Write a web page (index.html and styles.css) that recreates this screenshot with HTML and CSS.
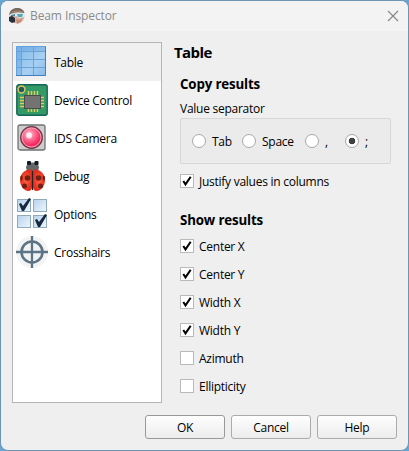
FILE: index.html
```html
<!DOCTYPE html>
<html lang="en">
<head>
<meta charset="utf-8">
<title>Beam Inspector</title>
<link rel="stylesheet" href="styles.css">
</head>
<body>
<div class="window">
  <header class="titlebar">
    <svg class="logo" width="16" height="16" viewBox="0 0 16 16">
      <circle cx="8" cy="8" r="7.500" fill="#d9b3a0"/>
      <path d="M0 7C1 2 4 0 8 0c4 0 7 2 7.500 5L9 4 3 5z" fill="#796860"/>
      <path d="M3 4l5-1 6 1" stroke="#a78c7a" fill="none"/>
      <path d="M1 6l7-1 7.500 0v4l-5 1-3-2-6 1z" fill="#dce9ed"/>
      <path d="M8 6h6l-1 3-4 0z" fill="#56a8b8"/><path d="M2 7l4-1v2l-4 1z" fill="#518795"/>
      <path d="M0 9l3-1 3 2v4l-3 1-3-2z" fill="#292e38"/>
      <path d="M7 11l3 1 3-2-1 4-4 2z" fill="#c48b79"/>
    </svg>
    <span class="caption">Beam Inspector</span>
    <svg class="close" width="12" height="12" viewBox="0 0 12 12"><path d="M1 1l10 10M11 1L1 11" stroke="#858585" stroke-width="1.100"/></svg>
  </header>
  <main class="body">
    <nav class="pages">
      <div class="page selected">
        <svg width="32" height="32" viewBox="0 0 32 32">
          <defs><linearGradient id="tb" x2="1" y2="1"><stop stop-color="#82b8e9"/><stop offset=".6" stop-color="#a7d0f2"/><stop offset="1" stop-color="#86b9e8"/></linearGradient></defs>
          <rect x="1" y="1" width="29" height="29" fill="url(#tb)"/>
          <path d="M1 1h29v4H1zM1 1h4v29H1z" fill="#5b9bdc" opacity=".3"/>
          <path d="M1 5.500h29M1 13.500h29M1 21.500h29M5.500 1v29M17.500 1v29" stroke="#6ba3d8" fill="none"/>
          <path d="M.5 30V.5H30" stroke="#62a1df" fill="none"/><path d="M29.500 1v28.500H0" stroke="#437fc1" fill="none"/>
        </svg><span>Table</span>
      </div>
      <div class="page">
        <svg width="32" height="32" viewBox="0 0 32 32">
          <rect x=".8" y=".8" width="30.400" height="30.400" rx="2" fill="#339966" stroke="#146458" stroke-width="1.400"/>
          <circle cx="5.500" cy="5.500" r="3.400" fill="#155e65" stroke="#e2c15b" stroke-width="1.500"/>
          <path d="M12.500 7v21M15.500 7v21M18.500 7v21M21.500 7v21M4 13.500h24M4 16.500h24M4 19.500h24M4 22.500h24" stroke="#e0cb62" stroke-width="1.500"/>
          <rect x="8.500" y="11.500" width="16" height="13" fill="#737373" stroke="#4b4b4b"/>
        </svg><span>Device Control</span>
      </div>
      <div class="page">
        <svg width="32" height="32" viewBox="0 0 32 32">
          <defs><radialGradient id="cam" cx=".4" cy=".35"><stop stop-color="#ffdbe4"/><stop offset=".35" stop-color="#ff86a6"/><stop offset="1" stop-color="#f52c63"/></radialGradient></defs>
          <rect x="2" y="3" width="27" height="25" rx="2" fill="#cdcdcd" stroke="#727272" stroke-width="1.300"/>
          <circle cx="15.500" cy="15.500" r="10.800" fill="url(#cam)" stroke="#693947" stroke-width="1.300"/>
          <circle cx="15.500" cy="15.500" r="9.500" fill="none" stroke="#f9a4b7" stroke-width="1"/>
          <circle cx="13" cy="13.500" r="3" fill="#fff" opacity=".75"/>
        </svg><span>IDS Camera</span>
      </div>
      <div class="page">
        <svg width="32" height="32" viewBox="0 0 32 32">
          <defs><radialGradient id="bug"><stop stop-color="#ff6042"/><stop offset="1" stop-color="#df2d1e"/></radialGradient></defs>
          <ellipse cx="16.500" cy="7.500" rx="6.500" ry="5" fill="#666"/>
          <rect x="11" y="1" width="4" height="4" rx="1" fill="#111b26"/><rect x="18.500" y="1" width="4" height="4" rx="1" fill="#111b26"/>
          <path d="M16 10C11 8 4 13 4 20c0 7 5 11 8 11 3 0 4-2 4-4z" fill="url(#bug)"/>
          <path d="M17 10c5-2 12 3 12 10 0 7-5 11-8 11-3 0-4-2-4-4z" fill="url(#bug)"/>
          <path d="M16.500 11v19" stroke="#222" stroke-width="1.200"/>
          <g fill="#722014"><circle cx="11.500" cy="18" r="2.800"/><circle cx="22.500" cy="18" r="2.800"/><ellipse cx="5.500" cy="18" rx="1.200" ry="2.500"/><ellipse cx="27.800" cy="18" rx="1.200" ry="2.500"/><circle cx="8.500" cy="26" r="2.500"/><circle cx="24.500" cy="26" r="2.500"/></g>
        </svg><span>Debug</span>
      </div>
      <div class="page">
        <svg width="32" height="32" viewBox="0 0 32 32">
          <defs><linearGradient id="op" x2="1" y2="1"><stop stop-color="#b7d2ed"/><stop offset="1" stop-color="#edf7ff"/></linearGradient></defs>
          <g fill="url(#op)" stroke="#91aaba"><rect x="1.500" y="1.500" width="13" height="12"/><rect x="17.500" y="1.500" width="13" height="12"/><rect x="1.500" y="17.500" width="13" height="12"/><rect x="17.500" y="17.500" width="13" height="12"/></g>
          <path id="tick" d="M3 6l2-1 2 3 6-8 2 1-7 12H6z" fill="#17273e"/>
          <use href="#tick" x="16" y="16"/>
        </svg><span>Options</span>
      </div>
      <div class="page">
        <svg width="32" height="32" viewBox="0 0 32 32">
          <circle cx="16" cy="16" r="16" fill="#f3f3f3"/>
          <circle cx="16" cy="16" r="10.500" fill="none" stroke="#5d7386" stroke-width="2.600"/>
          <path d="M16 0v32M0 16h32" stroke="#5d7386" stroke-width="2.300"/>
        </svg><span>Crosshairs</span>
      </div>
    </nav>
    <section class="content">
      <h1>Table</h1>
      <h2 class="copy">Copy results</h2>
      <p class="label">Value separator</p>
      <div class="group">
        <label class="radio tab"><i></i><span>Tab</span></label>
        <label class="radio space"><i></i><span>Space</span></label>
        <label class="radio comma"><i></i><span>,</span></label>
        <label class="radio on"><i></i><span>;</span></label>
      </div>
      <label class="check justify"><i><svg width="12" height="12" viewBox="0 0 12 12"><path id="mark" d="M2.300 6l2.200 3.400L9.700 1.800" fill="none" stroke="#000" stroke-width="2"/></svg></i><span>Justify values in columns</span></label>
      <h2 class="show">Show results</h2>
      <div class="checks">
        <label class="check"><i><svg width="12" height="12" viewBox="0 0 12 12"><use href="#mark"/></svg></i><span>Center X</span></label>
        <label class="check"><i><svg width="12" height="12" viewBox="0 0 12 12"><use href="#mark"/></svg></i><span>Center Y</span></label>
        <label class="check"><i><svg width="12" height="12" viewBox="0 0 12 12"><use href="#mark"/></svg></i><span>Width X</span></label>
        <label class="check"><i><svg width="12" height="12" viewBox="0 0 12 12"><use href="#mark"/></svg></i><span>Width Y</span></label>
        <label class="check"><i></i><span>Azimuth</span></label>
        <label class="check"><i></i><span>Ellipticity</span></label>
      </div>
    </section>
  </main>
  <footer class="buttons"><button class="ok">OK</button><button>Cancel</button><button>Help</button></footer>
</div>
</body>
</html>
```

FILE: styles.css
```css
* { box-sizing: border-box; }
body { margin: 0; background: #68a5d3; font: 12px/16px "Open Sans", "Noto Sans", sans-serif; letter-spacing: -.26px; color: #000; }
.window { width: 409px; height: 451px; border: 1px solid #6b94b5; border-radius: 8px; background: #efefef; overflow: hidden; }
.titlebar { display: flex; align-items: center; height: 30px; padding: 0 9px 0 8px; background: #f3f3f3; }
.caption { margin-left: 5px; color: #8b8b8b; letter-spacing: -.1px; }
.close { margin-left: auto; margin-top: -1px; }
.body { display: flex; height: 372px; padding: 11px 17px 0 11px; }
.pages { width: 150px; height: 361px; border: 1px solid #b5b5b5; background: #fff; }
.page { display: flex; align-items: center; gap: 6px; height: 38px; padding-left: 3px; }
.page svg { flex: none; margin-top: -1px; }
.page span { margin-top: 2px; }
.selected { background: #f0f0f0; }
.content { flex: 1; padding-left: 12px; }
h1, h2, p { margin: 0; }
h1 { font-size: 15px; line-height: 20px; letter-spacing: -.6px; }
h2 { margin-left: 6px; font-size: 13.3px; line-height: 20px; letter-spacing: -.15px; }
.copy { margin-top: 12px; }
.label { margin: 7px 0 0 6px; }
.group { display: flex; align-items: center; width: 211px; height: 46px; margin: 1px 0 0 6px; padding-left: 11px; border: 1px solid #d7d7d7; border-radius: 2px; background: #ebebeb; }
.radio { display: flex; align-items: center; gap: 6px; }
.radio span, .check span { padding-top: 2px; }
.radio i { width: 14px; height: 14px; border: 1px solid #a8a8a8; border-radius: 50%; background: #fff; }
.tab { width: 50px; }
.space { width: 63px; }
.comma { width: 40px; }
.on i { background: radial-gradient(circle, #404040 0 3px, #fff 3.600px); }
.check { display: flex; align-items: center; height: 14px; gap: 5px; margin-left: 6px; }
.check i { width: 14px; height: 14px; border: 1px solid #bababa; background: #fff; }
.check svg { display: block; }
.justify { margin-top: 10px; }
.show { margin-top: 22px; }
.checks { display: flex; flex-direction: column; gap: 14px; margin-top: 9px; }
.buttons { display: flex; justify-content: flex-end; gap: 6px; padding: 12px 11px 0 0; }
button { width: 80px; height: 24px; padding: 2px 0 0; border: 1px solid #ababab; border-radius: 3px; background: linear-gradient(#fefefe, #ececec); color: #000; font: inherit; letter-spacing: inherit; }
.ok { border-color: #999; }
```
